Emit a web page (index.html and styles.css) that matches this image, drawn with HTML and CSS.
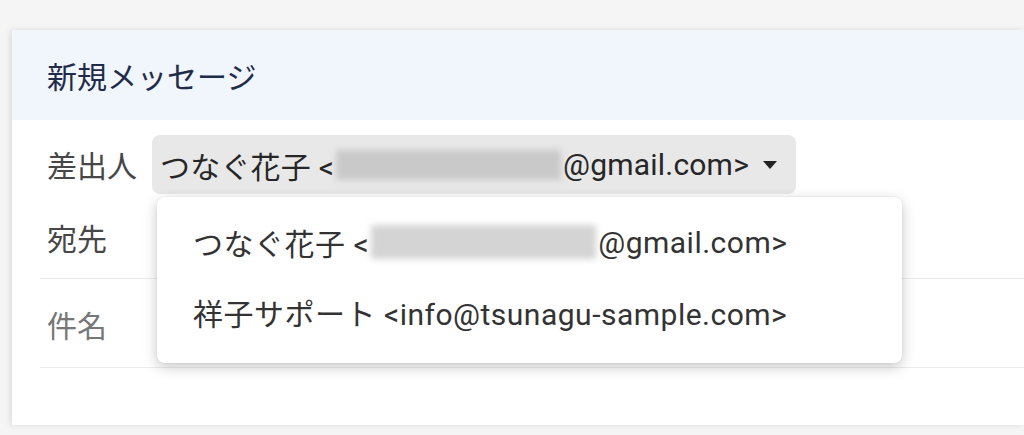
FILE: index.html
```html
<!DOCTYPE html>
<html lang="ja">
<head>
<meta charset="utf-8">
<link rel="stylesheet" href="styles.css">
</head>
<body>
<div class="window">
  <div class="header">新規メッセージ</div>
  <div class="row row-from">
    <span class="label">差出人</span>
    <div class="chip">
      <span class="chip-text">つなぐ花子 &lt;<span class="blur blur-chip"></span>@gmail.com&gt;</span>
      <svg class="caret" width="14" height="8" viewBox="0 0 14 8"><path d="M0 0h14L7 8z" fill="#222"/></svg>
    </div>
  </div>
  <div class="row row-to"><span class="label">宛先</span></div>
  <div class="row row-subject"><span class="label light">件名</span></div>
  <div class="menu">
    <div class="item">つなぐ花子 &lt;<span class="blur blur-item"></span>@gmail.com&gt;</div>
    <div class="item">祥子サポート &lt;info@tsunagu-sample.com&gt;</div>
  </div>
</div>
</body>
</html>
```
FILE: styles.css
```css
html, body { margin: 0; padding: 0; }
body {
  background: #f5f5f5;
  font-family: Roboto, "Noto Sans CJK JP", sans-serif;
  height: 435px;
  overflow: hidden;
}
.window {
  position: relative;
  margin: 30px 0 0 12px;
  height: 395px;
  background: #fff;
  box-shadow: -2px 0 6px rgba(0,0,0,0.10);
}
.header {
  height: 90px;
  background: #f1f5fc;
  display: flex;
  align-items: center;
  padding-left: 35px;
  font-size: 30px;
  color: #1f2b4a;
}
.row {
  display: flex;
  align-items: flex-start;
}
.label {
  font-size: 30px;
  color: #474747;
  width: 105px;
  flex: none;
}
.label.light { color: #777; }
.row-from {
  height: 80px;
  padding-left: 35px;
}
.row-from .label { margin-top: 22px; }
.chip {
  margin-top: 15px;
  height: 59px;
  width: 644px;
  box-sizing: border-box;
  background: #e8e8e8;
  border-radius: 8px;
  display: flex;
  align-items: center;
  justify-content: space-between;
  padding: 0 19px 0 8px;
  font-size: 30px;
  letter-spacing: 0.2px;
  color: #262626;
}
.chip-text { display: flex; align-items: center; white-space: nowrap; }
.blur {
  display: inline-block;
  background: #c9c9c9;
  filter: blur(3px);
}
.blur-chip { width: 225px; height: 30px; margin: 0 2px; }
.blur-item { width: 225px; height: 34px; margin: 0 2px; background: #d4d4d4; }
.row-to {
  height: 78px;
  margin-left: 28px;
  padding-left: 7px;
  border-bottom: 1px solid #ececec;
}
.row-to .label { margin-top: 15px; }
.row-subject {
  height: 88px;
  margin-left: 28px;
  padding-left: 7px;
  border-bottom: 1px solid #ececec;
}
.row-subject .label { margin-top: 23px; }
.menu {
  position: absolute;
  left: 145px;
  top: 167px;
  width: 745px;
  height: 166px;
  background: #fff;
  border-radius: 8px;
  box-shadow: 0 4px 14px rgba(0,0,0,0.22), 0 0 3px rgba(0,0,0,0.06);
  box-sizing: border-box;
  padding: 10px 0 0 36px;
  display: flex;
  flex-direction: column;
}
.item {
  height: 70px;
  display: flex;
  align-items: center;
  font-size: 30px;
  letter-spacing: 0.5px;
  color: #333;
  white-space: nowrap;
}
```
